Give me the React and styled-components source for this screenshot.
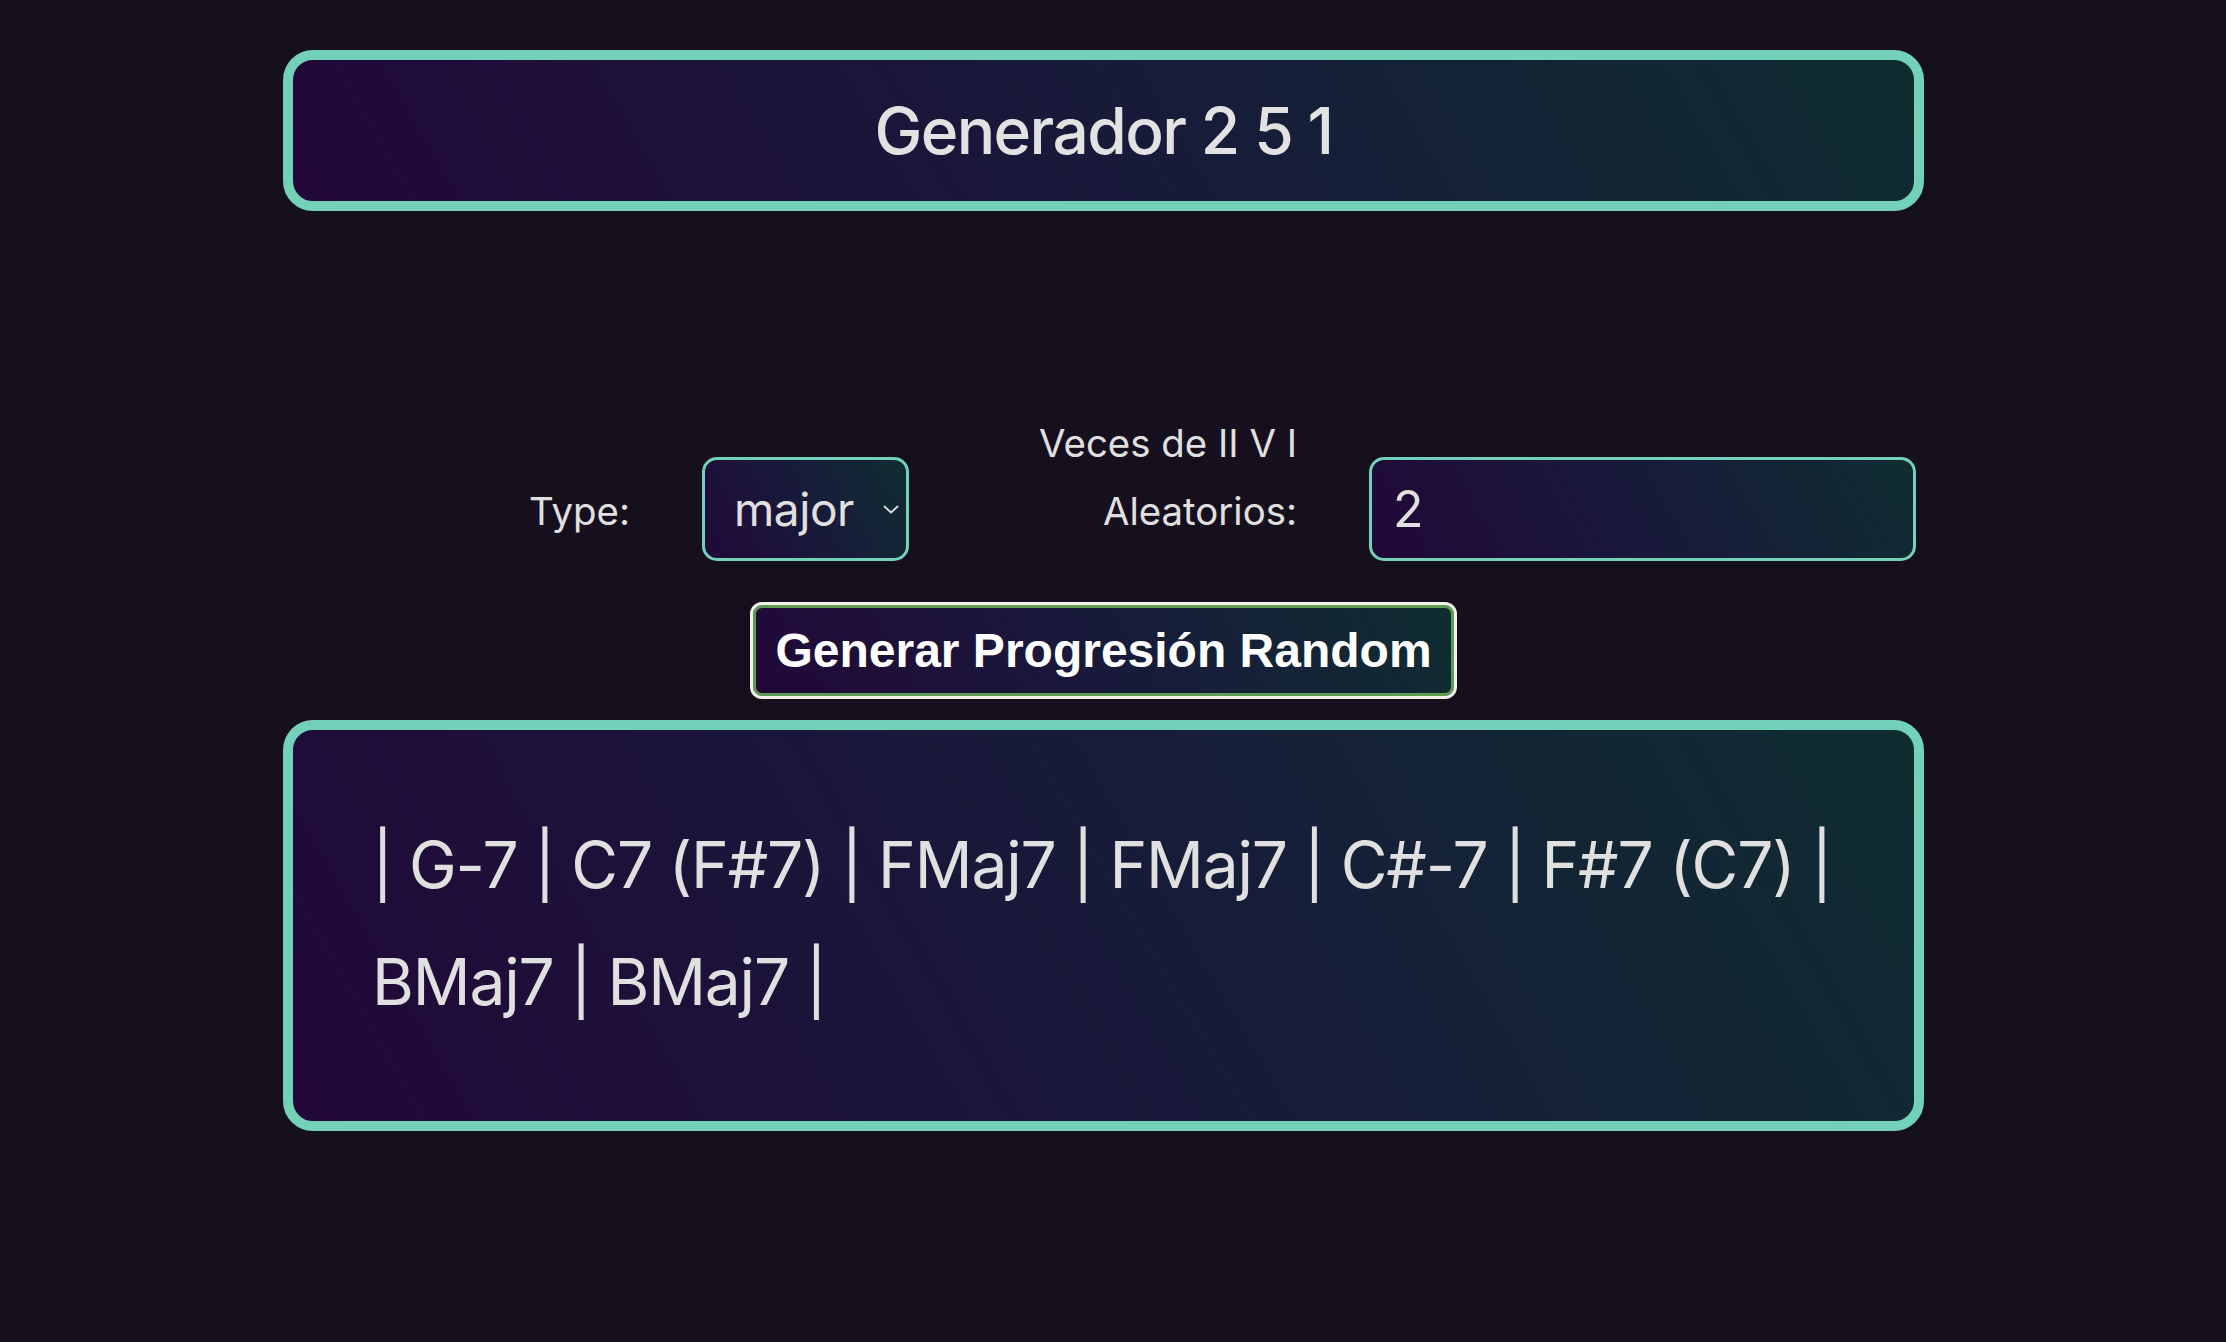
import React, { useState } from 'react';
import styled, { createGlobalStyle } from 'styled-components';

const GlobalStyle = createGlobalStyle`
  body {
    margin: 0;
    background: #150f1e;
    color: #e0e0e0;
    font-family: Inter, "Noto Sans", sans-serif;
  }
`;

const teal = '#72d1b8';
const panelBg = 'linear-gradient(60deg, #220838 0%, #181a3a 50%, #0f2d31 100%)';

const Main = styled.main`
  box-sizing: border-box;
  min-height: 100vh;
  padding: 50px 302px 0 283px;
  display: flex;
  flex-direction: column;
`;

const Header = styled.header`
  box-sizing: border-box;
  height: 161px;
  border: 10px solid ${teal};
  border-radius: 30px;
  background: ${panelBg};
  display: flex;
  align-items: center;
  justify-content: center;
`;

const Title = styled.h1`
  margin: 0;
  font-size: 64px;
  font-weight: 500;
  letter-spacing: -0.025em;
  color: #e2e2e2;
`;

const Controls = styled.div`
  margin-top: 198px;
  padding-right: 8px;
  display: flex;
  justify-content: flex-end;
  align-items: flex-end;
  gap: 72px;
`;

const Label = styled.label`
  width: ${p => p.$width || 'auto'};
  margin-bottom: 16px;
  font-size: 38.4px;
  line-height: 68px;
  text-align: right;
`;

const SelectWrap = styled.div`
  position: relative;
  width: 207px;
  height: 104px;
`;

const Select = styled.select`
  box-sizing: border-box;
  width: 100%;
  height: 100%;
  appearance: none;
  padding: 0 0 0 29px;
  border: 3px solid ${teal};
  border-radius: 15px;
  background: ${panelBg};
  color: #e0e0e0;
  font-family: inherit;
  font-size: 46px;
  letter-spacing: -0.01em;
  outline: none;
`;

const Chevron = styled.svg`
  position: absolute;
  right: 10px;
  top: 48px;
  width: 16px;
  height: 9px;
  pointer-events: none;
`;

const NumberInput = styled.input`
  box-sizing: border-box;
  width: 547px;
  height: 104px;
  padding: 0 0 0 21px;
  border: 3px solid ${teal};
  border-radius: 15px;
  background: ${panelBg};
  color: #e0e0e0;
  font-family: inherit;
  font-size: 50px;
  outline: none;
  -moz-appearance: textfield;
  &::-webkit-inner-spin-button,
  &::-webkit-outer-spin-button {
    -webkit-appearance: none;
    margin: 0;
  }
`;

const GenerateButton = styled.button`
  align-self: center;
  margin-top: 41px;
  padding: 18px 22px;
  border: 3px solid #f2f2ea;
  border-radius: 12px;
  box-shadow: inset 0 0 0 3px #5e9b53;
  background: ${panelBg};
  color: #fff;
  font-family: "Liberation Sans", Arial, sans-serif;
  font-weight: 700;
  font-size: 48px;
  line-height: 1.15;
  cursor: pointer;
`;

const Result = styled.section`
  box-sizing: border-box;
  height: 411px;
  margin-top: 21px;
  padding: 76px 79px;
  border: 10px solid ${teal};
  border-radius: 30px;
  background: ${panelBg};
  font-size: 64px;
  line-height: 117px;
  letter-spacing: -0.018em;
  color: #e0e0e0;
`;

const progression = ['G-7', 'C7 (F#7)', 'FMaj7', 'FMaj7', 'C#-7', 'F#7 (C7)', 'BMaj7', 'BMaj7'];

export default function App() {
  const [type, setType] = useState('major');
  const [times, setTimes] = useState(2);

  return (
    <>
      <GlobalStyle />
      <Main>
        <Header>
          <Title>Generador 2 5 1</Title>
        </Header>

        <Controls>
          <Label htmlFor="type">Type:</Label>
          <SelectWrap>
            <Select id="type" value={type} onChange={e => setType(e.target.value)}>
              <option value="major">major</option>
              <option value="minor">minor</option>
            </Select>
            <Chevron viewBox="0 0 16 9" fill="none" stroke="#e0e0e0" strokeWidth="1.8" strokeLinecap="round" strokeLinejoin="round">
              <path d="M1.5 1.5 L8 7.5 L14.5 1.5" />
            </Chevron>
          </SelectWrap>
          <Label htmlFor="times" $width="316px">Veces de II V I<br />Aleatorios:</Label>
          <NumberInput id="times" type="number" value={times} onChange={e => setTimes(e.target.value)} />
        </Controls>

        <GenerateButton>Generar Progresión Random</GenerateButton>

        <Result>
          {'| ' + progression.join(' | ') + ' |'}
        </Result>
      </Main>
    </>
  );
}
